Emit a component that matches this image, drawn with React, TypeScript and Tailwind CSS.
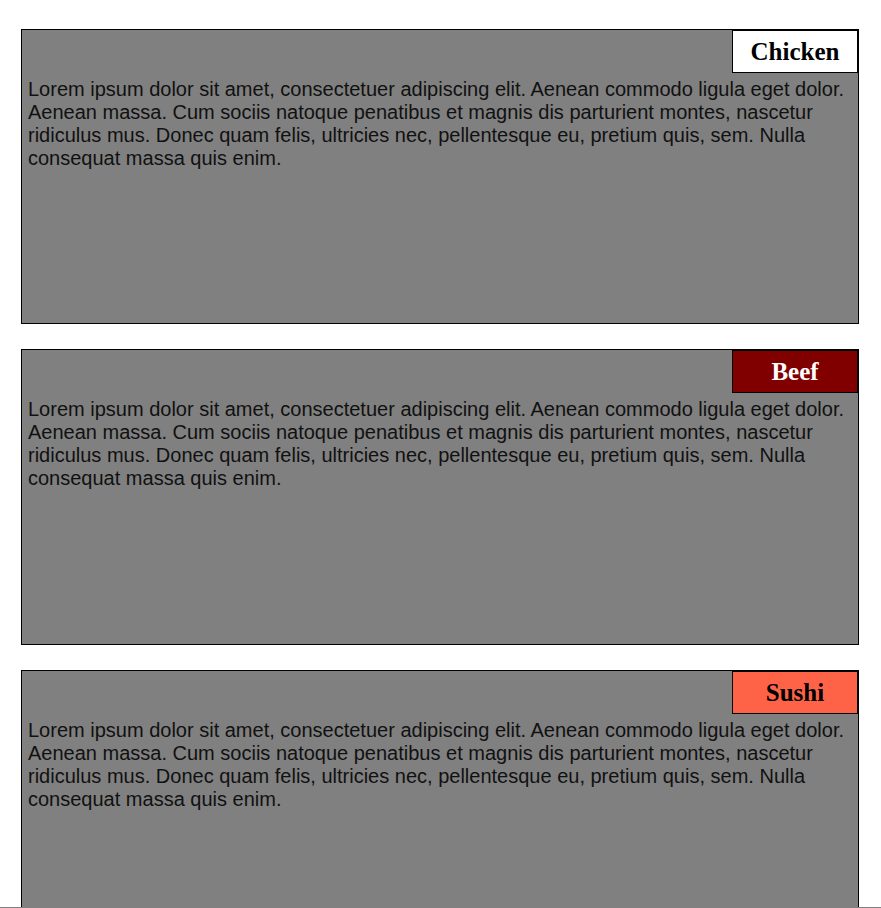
const lorem =
  "Lorem ipsum dolor sit amet, consectetuer adipiscing elit. Aenean commodo ligula eget dolor. Aenean massa. Cum sociis natoque penatibus et magnis dis parturient montes, nascetur ridiculus mus. Donec quam felis, ultricies nec, pellentesque eu, pretium quis, sem. Nulla consequat massa quis enim.";

const dishes = [
  { name: "Chicken", tag: "bg-white text-black" },
  { name: "Beef", tag: "bg-[#800000] text-white" },
  { name: "Sushi", tag: "bg-[#ff6347] text-black" },
];

export default function App() {
  return (
    <div className="min-h-screen bg-white px-[21px] pt-[29px] font-['Liberation_Sans',Arial,sans-serif]">
      <div className="flex flex-col gap-[25px]">
        {dishes.map((d) => (
          <div
            key={d.name}
            className="flex h-[295.4px] w-[838px] shrink-0 flex-col border border-black bg-[#808080]"
          >
            <div
              className={`flex h-[43px] w-[126px] items-center justify-center self-end border border-black font-['Liberation_Serif','Times_New_Roman',serif] text-[25px] font-bold ${d.tag}`}
            >
              {d.name}
            </div>
            <p className="mt-[5px] px-[6px] text-[20px] leading-[23px] text-[#111]">{lorem}</p>
          </div>
        ))}
      </div>
      <div className="fixed inset-x-0 bottom-0 h-px bg-[#808080]" />
    </div>
  );
}
